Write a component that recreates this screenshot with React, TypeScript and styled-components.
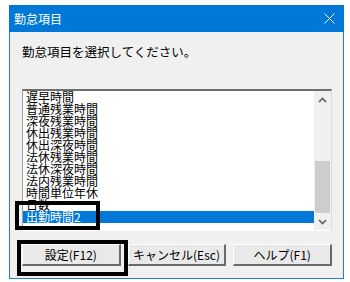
import * as React from 'react';
import styled, { createGlobalStyle } from 'styled-components';

const items = [
  '遅早時間',
  '普通残業時間',
  '深夜残業時間',
  '休出残業時間',
  '休出深夜時間',
  '法休残業時間',
  '法休深夜時間',
  '法内残業時間',
  '時間単位年休',
  '日数',
  '出勤時間2',
];
const selected = 10;

const GlobalStyle = createGlobalStyle`
  html, body {
    margin: 0;
    background: #ffffff;
    font-family: "Noto Sans CJK JP", "DejaVu Sans", sans-serif;
  }
`;

const Page = styled.div`
  position: relative;
  width: 350px;
  height: 282px;
  padding: 5px 0 0 9px;
  box-sizing: border-box;
`;

const Dialog = styled.div`
  width: 335px;
  height: 274px;
  box-sizing: border-box;
  border: 1px solid #1883d7;
  border-top: none;
  background: #f0f0f0;
  display: flex;
  flex-direction: column;
`;

const TitleBar = styled.div`
  height: 27px;
  margin: 0 -1px;
  background: #0078d7;
  color: #fff;
  display: flex;
  align-items: center;
  justify-content: space-between;
  padding: 0 9px 0 5px;
  font-size: 12px;
`;

const Body = styled.div`
  flex: 1;
  padding: 12px 11px 0 12px;
  display: flex;
  flex-direction: column;
`;

const Label = styled.div`
  font-size: 12.5px;
  line-height: 16px;
  color: #000;
  height: 16px;
`;

const ListBox = styled.div`
  margin-top: 29px;
  height: 142px;
  box-sizing: border-box;
  border-style: solid;
  border-width: 2px 1px 1px 1px;
  border-color: #6d6d6d #dcdcdc #ffffff #a0a0a0;
  background: #fff;
  display: flex;
`;

const Rows = styled.div`
  flex: 1;
`;

const Row = styled.div<{ $active?: boolean }>`
  height: 12px;
  line-height: 12px;
  font-size: 12px;
  padding-left: 3px;
  white-space: nowrap;
  color: ${p => (p.$active ? '#fff' : '#000')};
  background: ${p => (p.$active ? '#0078d7' : 'transparent')};
`;

const ScrollBar = styled.div`
  width: 17px;
  background: #f0f0f0;
  display: flex;
  flex-direction: column;
`;

const Arrow = styled.div`
  height: 17px;
  display: flex;
  align-items: center;
  justify-content: center;
`;

const Track = styled.div`
  flex: 1;
  display: flex;
  flex-direction: column;
  justify-content: flex-end;
`;

const Thumb = styled.div`
  height: 52px;
  margin: 0 1px;
  background: #cdcdcd;
`;

const Buttons = styled.div`
  margin-top: 13px;
  display: flex;
  gap: 7px;
`;

const Button = styled.div`
  width: 99px;
  height: 22px;
  box-sizing: border-box;
  border-style: solid;
  border-width: 1px 2px 2px 1px;
  border-color: #ffffff #6a6a6a #6a6a6a #ffffff;
  background: #e9e9e9;
  font-size: 12px;
  display: flex;
  align-items: center;
  justify-content: center;
  color: #000;
`;

const Mark = styled.div<{ $x: number; $y: number; $w: number; $h: number }>`
  position: absolute;
  left: ${p => p.$x}px;
  top: ${p => p.$y}px;
  width: ${p => p.$w}px;
  height: ${p => p.$h}px;
  box-sizing: border-box;
  border: 4px solid #000;
`;

const Chevron = ({ up }: { up?: boolean }) => (
  <svg width="9" height="6" viewBox="0 0 9 6">
    <path
      d={up ? 'M1 5 L4.5 1.5 L8 5' : 'M1 1 L4.5 4.5 L8 1'}
      fill="none"
      stroke="#606060"
      strokeWidth="1.6"
    />
  </svg>
);

export default () => (
  <Page>
    <GlobalStyle />
    <Dialog>
      <TitleBar>
        <span>勤怠項目</span>
        <svg width="11" height="11" viewBox="0 0 11 11">
          <path d="M0.5 0.5 L10.5 10.5 M10.5 0.5 L0.5 10.5" stroke="#fff" strokeWidth="1" />
        </svg>
      </TitleBar>
      <Body>
        <Label>勤怠項目を選択してください。</Label>
        <ListBox>
          <Rows>
            {items.map((t, i) => (
              <Row key={t} $active={i === selected}>
                {t}
              </Row>
            ))}
          </Rows>
          <ScrollBar>
            <Arrow>
              <Chevron up />
            </Arrow>
            <Track>
              <Thumb />
            </Track>
            <Arrow>
              <Chevron />
            </Arrow>
          </ScrollBar>
        </ListBox>
        <Buttons>
          <Button>設定(F12)</Button>
          <Button>キャンセル(Esc)</Button>
          <Button>ヘルプ(F1)</Button>
        </Buttons>
      </Body>
    </Dialog>
    <Mark $x={15} $y={201} $w={85} $h={29} />
    <Mark $x={17} $y={240} $w={111} $h={36} />
  </Page>
);
